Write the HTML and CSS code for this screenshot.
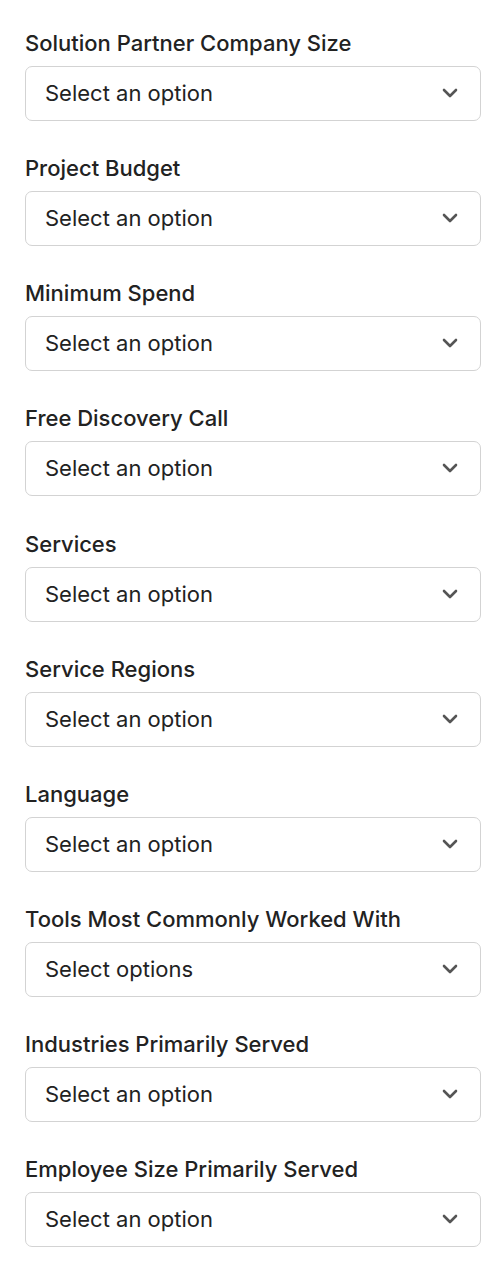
FILE: index.html
```html
<!DOCTYPE html>
<html lang="en">
<head>
<meta charset="utf-8">
<link rel="stylesheet" href="styles.css">
</head>
<body>
<form class="filters">
  <div class="field"><label class="label">Solution Partner Company Size</label><div class="select"><span>Select an option</span><svg class="chev" viewBox="0 0 16 10" width="16" height="10"><path d="M2 2l6 6 6-6"/></svg></div></div>
  <div class="field"><label class="label">Project Budget</label><div class="select"><span>Select an option</span><svg class="chev" viewBox="0 0 16 10" width="16" height="10"><path d="M2 2l6 6 6-6"/></svg></div></div>
  <div class="field"><label class="label">Minimum Spend</label><div class="select"><span>Select an option</span><svg class="chev" viewBox="0 0 16 10" width="16" height="10"><path d="M2 2l6 6 6-6"/></svg></div></div>
  <div class="field"><label class="label">Free Discovery Call</label><div class="select"><span>Select an option</span><svg class="chev" viewBox="0 0 16 10" width="16" height="10"><path d="M2 2l6 6 6-6"/></svg></div></div>
  <div class="field"><label class="label">Services</label><div class="select"><span>Select an option</span><svg class="chev" viewBox="0 0 16 10" width="16" height="10"><path d="M2 2l6 6 6-6"/></svg></div></div>
  <div class="field"><label class="label">Service Regions</label><div class="select"><span>Select an option</span><svg class="chev" viewBox="0 0 16 10" width="16" height="10"><path d="M2 2l6 6 6-6"/></svg></div></div>
  <div class="field"><label class="label">Language</label><div class="select"><span>Select an option</span><svg class="chev" viewBox="0 0 16 10" width="16" height="10"><path d="M2 2l6 6 6-6"/></svg></div></div>
  <div class="field"><label class="label">Tools Most Commonly Worked With</label><div class="select"><span>Select options</span><svg class="chev" viewBox="0 0 16 10" width="16" height="10"><path d="M2 2l6 6 6-6"/></svg></div></div>
  <div class="field"><label class="label">Industries Primarily Served</label><div class="select"><span>Select an option</span><svg class="chev" viewBox="0 0 16 10" width="16" height="10"><path d="M2 2l6 6 6-6"/></svg></div></div>
  <div class="field"><label class="label">Employee Size Primarily Served</label><div class="select"><span>Select an option</span><svg class="chev" viewBox="0 0 16 10" width="16" height="10"><path d="M2 2l6 6 6-6"/></svg></div></div>
</form>
</body>
</html>
```
FILE: styles.css
```css
html, body {
  margin: 0;
  padding: 0;
  background: #fff;
}
body {
  font-family: Inter, "Noto Sans", sans-serif;
  color: #222;
}
.filters {
  display: flex;
  flex-direction: column;
  gap: 34.15px;
  padding: 30px 23px 0 25px;
}
.field {
  display: flex;
  flex-direction: column;
  gap: 10px;
}
.label {
  font-size: 22px;
  font-weight: 500;
  line-height: 26px;
  color: #222;
}
.select {
  box-sizing: border-box;
  height: 55px;
  border: 1px solid #d3d3d3;
  border-radius: 7px;
  display: flex;
  align-items: center;
  justify-content: space-between;
  padding: 0 22px 1px 19px;
  font-size: 22px;
  color: #222;
}
.chev {
  fill: none;
  stroke: #555;
  stroke-width: 2.6;
  stroke-linecap: round;
  stroke-linejoin: round;
}
```
